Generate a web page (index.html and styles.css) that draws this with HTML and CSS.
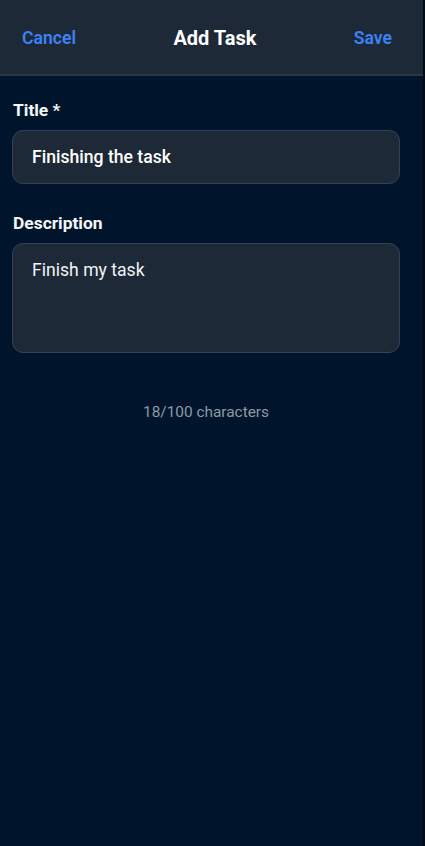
FILE: index.html
```html
<!DOCTYPE html>
<html>
<head>
<meta charset="utf-8">
<link rel="stylesheet" href="styles.css">
</head>
<body>
<div class="app">
  <header class="header">
    <span class="hbtn">Cancel</span>
    <span class="htitle">Add Task</span>
    <span class="hbtn">Save</span>
  </header>
  <main class="form">
    <label class="label">Title *</label>
    <div class="input">Finishing the task</div>
    <label class="label desc-label">Description</label>
    <div class="input textarea">Finish my task</div>
    <div class="count">18/100 characters</div>
  </main>
</div>
</body>
</html>
```
FILE: styles.css
```css
* { box-sizing: border-box; }
html, body { margin: 0; padding: 0; height: 100%; background: #020a14; }
body { font-family: Roboto, "Noto Sans", sans-serif; }
.app {
  width: 423px;
  height: 846px;
  background: #00152b;
  display: flex;
  flex-direction: column;
}
.header {
  height: 76px;
  background: #1e2938;
  border-bottom: 2px solid #2a3646;
  display: flex;
  align-items: center;
  justify-content: space-between;
  padding: 1px 31px 0 22px;
}
.hbtn { color: #3b82f6; font-size: 17.6px; font-weight: 600; }
.htitle { color: #ffffff; font-size: 20px; font-weight: 700; }
.form {
  display: flex;
  flex-direction: column;
  padding: 24px 23px 0 12px;
}
.label {
  color: #f5f7fa;
  font-size: 17.4px;
  font-weight: 700;
  line-height: 21px;
  margin-bottom: 9px;
  padding-left: 1px;
}
.desc-label { margin-top: 29px; }
.input {
  height: 54px;
  background: #1e2938;
  border: 1.5px solid #354255;
  border-radius: 11px;
  color: #ffffff;
  font-size: 17.6px;
  font-weight: 500;
  padding: 0 19px;
  display: flex;
  align-items: center;
}
.textarea {
  height: 110px;
  align-items: flex-start;
  padding-top: 16px;
  font-weight: 400;
  color: #f1f3f6;
}
.count {
  margin-top: 50px;
  text-align: center;
  color: #8e99a8;
  font-size: 15.4px;
}
```
